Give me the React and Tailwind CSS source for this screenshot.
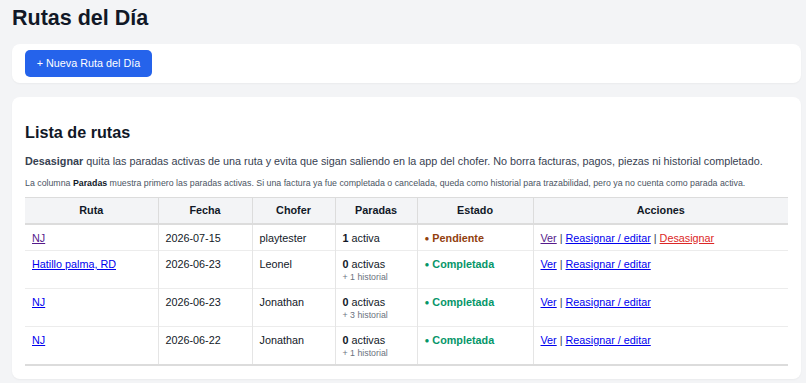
import React from "react";

const rows = [
  { ruta: "NJ", visited: true, fecha: "2026-07-15", chofer: "playtester", activas: "1", label: "activa", hist: null, estado: "Pendiente", desasignar: true },
  { ruta: "Hatillo palma, RD", fecha: "2026-06-23", chofer: "Leonel", activas: "0", label: "activas", hist: "+ 1 historial", estado: "Completada" },
  { ruta: "NJ", fecha: "2026-06-23", chofer: "Jonathan", activas: "0", label: "activas", hist: "+ 3 historial", estado: "Completada" },
  { ruta: "NJ", fecha: "2026-06-22", chofer: "Jonathan", activas: "0", label: "activas", hist: "+ 1 historial", estado: "Completada" },
];

const RutasDelDia = () => {
  return (
    <div className="min-h-[383px] bg-[#f3f4f6] pl-3 pr-[5px] pt-1 pb-1 text-[#111827]" style={{ fontFamily: "'Liberation Sans', Arial, sans-serif" }}>
      <h1 className="text-[21.5px] font-bold leading-[28px] mb-3">Rutas del Día</h1>

      {/* Toolbar */}
      <div className="bg-white rounded-lg px-[13px] py-[6px] mb-[14px] shadow-[0_1px_2px_rgba(0,0,0,0.04)]">
        <button className="bg-[#2563eb] text-white text-[10.8px] leading-[27px] h-[27px] w-[127px] rounded-[5px]">
          + Nueva Ruta del Día
        </button>
      </div>

      {/* Lista */}
      <div className="bg-white rounded-lg px-[13px] pt-[25px] pb-[13px] shadow-[0_1px_2px_rgba(0,0,0,0.04)]">
        <h2 className="text-[16.2px] font-bold leading-[20px] mb-3">Lista de rutas</h2>
        <p className="text-[10.8px] leading-[14px] text-[#374151] mb-[9px]">
          <b>Desasignar</b> quita las paradas activas de una ruta y evita que sigan saliendo en la app del chofer. No borra facturas, pagos, piezas ni historial completado.
        </p>
        <p className="text-[8.8px] leading-[12px] text-[#4b5563] mb-2">
          La columna <b className="text-[#111827]">Paradas</b> muestra primero las paradas activas. Si una factura ya fue completada o cancelada, queda como historial para trazabilidad, pero ya no cuenta como parada activa.
        </p>

        <table className="w-full border-collapse text-[10.8px] leading-[14px] border-t border-b-2 border-[#dcdcdc]">
          <thead>
            <tr className="bg-[#f3f4f6] h-[26px] border-b-2 border-[#dcdcdc]">
              <th className="w-[133px] border-r border-[#dcdcdc] font-bold">Ruta</th>
              <th className="w-[94px] border-x border-[#dcdcdc] font-bold">Fecha</th>
              <th className="w-[83px] border-x border-[#dcdcdc] font-bold">Chofer</th>
              <th className="w-[82px] border-x border-[#dcdcdc] font-bold">Paradas</th>
              <th className="w-[116px] border-x border-[#dcdcdc] font-bold">Estado</th>
              <th className="border-l border-[#dcdcdc] font-bold">Acciones</th>
            </tr>
          </thead>
          <tbody>
            {rows.map((r, i) => (
              <tr key={i} className="border-t border-[#ececec] align-top">
                <td className="px-[7px] pt-[6px] pb-[5px] border-r border-[#e5e5e5]">
                  <a href="#" className={`underline ${r.visited ? "text-[#551a8b]" : "text-[#0000ee]"}`}>{r.ruta}</a>
                </td>
                <td className="px-[7px] pt-[6px] border-x border-[#e5e5e5]">{r.fecha}</td>
                <td className="px-[7px] pt-[6px] border-x border-[#e5e5e5]">{r.chofer}</td>
                <td className="px-[7px] pt-[6px] pb-[5px] border-x border-[#e5e5e5]">
                  <div><b>{r.activas}</b> {r.label}</div>
                  {r.hist && <div className="text-[8.8px] leading-[12px] text-[#6b7280]">{r.hist}</div>}
                </td>
                <td className={`px-[7px] pt-[6px] border-x border-[#e5e5e5] font-bold ${r.estado === "Pendiente" ? "text-[#92400e]" : "text-[#059669]"}`}>
                  <span className="text-[8px] align-[1px]">●</span> {r.estado}
                </td>
                <td className="px-[7px] pt-[6px] border-l border-[#e5e5e5]">
                  <a href="#" className={`underline ${r.visited ? "text-[#551a8b]" : "text-[#0000ee]"}`}>Ver</a>
                  <span className="text-[#374151]"> | </span>
                  <a href="#" className="underline text-[#0000ee]">Reasignar / editar</a>
                  {r.desasignar && (
                    <>
                      <span className="text-[#374151]"> | </span>
                      <a href="#" className="underline text-[#dc2626]">Desasignar</a>
                    </>
                  )}
                </td>
              </tr>
            ))}
          </tbody>
        </table>
      </div>
    </div>
  );
};

export default RutasDelDia;
